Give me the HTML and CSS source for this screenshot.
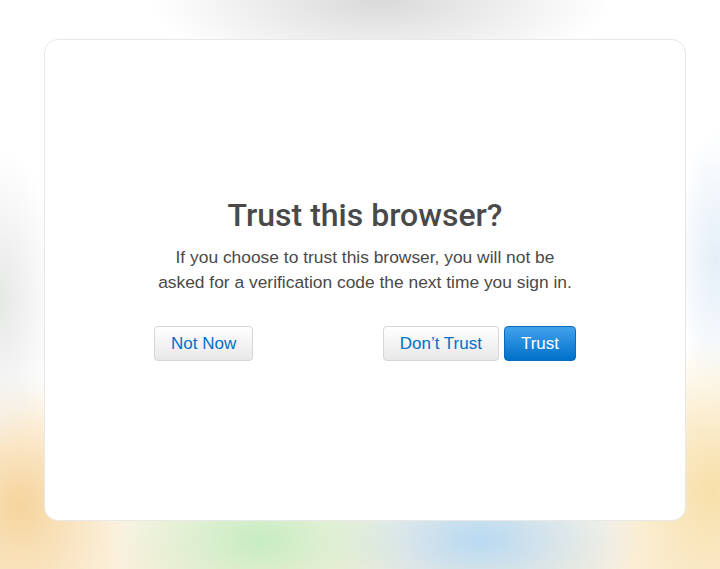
FILE: index.html
```html
<!DOCTYPE html>
<html>
<head>
<meta charset="UTF-8">
<title>Trust this browser?</title>
<link rel="stylesheet" href="styles.css">
</head>
<body>
	<div class="backdrop">
		<div class="card">
			<!--trust prompt-->
			<div class="prompt">
				<h1 class="title">Trust this browser?</h1>
				<p class="desc">If you choose to trust this browser, you will not be asked for a verification code the next time you sign in.</p>
				<div class="actions">
					<button class="btn" type="button">Not Now</button>
					<div class="right">
						<button class="btn" type="button">Don’t Trust</button>
						<button class="btn primary" type="button">Trust</button>
					</div>
				</div>
			</div>
		</div>
	</div>
</body>
</html>
```

FILE: styles.css
```css
/*page*/

body {
	margin: 0;
	padding: 0;
	overflow: hidden;
	font-family: "Liberation Sans", Arial, sans-serif;
	background-color: #fff;
}

.backdrop {
	width: 720px;
	height: 569px;
	padding: 39px 0 0 44px;
	box-sizing: border-box;
	background:
		radial-gradient(ellipse 230px 80px at 380px 0px, #d9d9d9, rgba(217,217,217,0) 100%),
		radial-gradient(ellipse 60px 150px at 0px 300px, #e6e8e6, rgba(230,232,230,0) 100%),
		radial-gradient(ellipse 110px 130px at 20px 505px, #f6d49c, rgba(246,212,156,0) 100%),
		radial-gradient(ellipse 150px 80px at 260px 540px, #c6ecc2, rgba(198,236,194,0) 100%),
		radial-gradient(ellipse 160px 80px at 480px 540px, #b8d9f2, rgba(184,217,242,0) 100%),
		radial-gradient(ellipse 110px 150px at 712px 490px, #f7dfa8, rgba(247,223,168,0) 100%),
		radial-gradient(ellipse 40px 130px at 715px 260px, #e4eef8, rgba(228,238,248,0) 100%),
		linear-gradient(#fff 0%, #fff 68%, #fbf0dc 100%);
}

.card { /*white panel*/
	width: 642px;
	height: 482px;
	box-sizing: border-box;
	background-color: #fff;
	border: 1px solid #e8e8e8;
	border-radius: 14px;
	display: flex;
	align-items: center;
	justify-content: center;
}

.prompt {
	width: 422px;
	text-align: center;
	margin-top: -4px;
}

.title {
	margin: 0;
	font-family: Roboto, "Liberation Sans", sans-serif;
	font-size: 32px;
	line-height: 40px;
	font-weight: 500;
	color: #494949;
}

.desc {
	margin: 10px auto 0 auto;
	max-width: 420px;
	font-size: 17.4px;
	line-height: 25px;
	color: #494949;
}

.actions {
	display: flex;
	justify-content: space-between;
	margin-top: 31px;
}

.right {
	display: flex;
	gap: 5px;
}

.btn {
	height: 35px;
	padding: 0 16px;
	font-family: inherit;
	font-size: 17px;
	color: #0070c9;
	background: linear-gradient(#fff, #e8e8e8);
	border: 1px solid #d6d6d6;
	border-radius: 4px;
}

.btn.primary {
	color: #fff;
	background: linear-gradient(#42a1ec, #0070c9);
	border-color: #0a6ac0;
}
```
